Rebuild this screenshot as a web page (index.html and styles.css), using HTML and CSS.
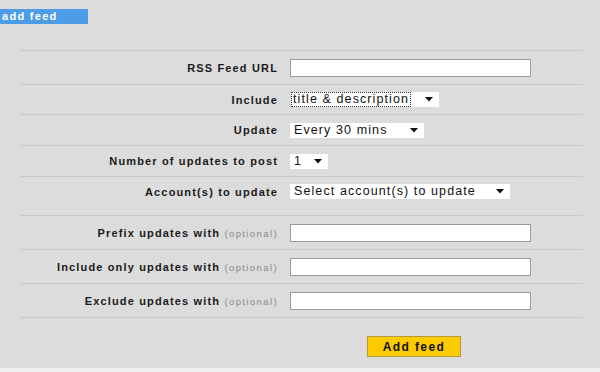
FILE: index.html
```html
<!DOCTYPE html>
<html>
<head>
<meta charset="utf-8">
<link rel="stylesheet" href="styles.css">
</head>
<body>
<div class="page">
  <div class="tab">add feed</div>
  <form class="form">
    <div class="row r34">
      <label class="lbl">RSS Feed URL</label>
      <div class="ctl"><input class="txt" type="text"></div>
    </div>
    <div class="row r30">
      <label class="lbl">Include</label>
      <div class="ctl">
        <div class="sel w148"><span class="val focus">title &amp; description</span><svg class="arr" width="8" height="5" viewBox="0 0 8 5"><path d="M0 0H8L4 4.5Z" fill="#111"/></svg></div>
      </div>
    </div>
    <div class="row r31">
      <label class="lbl">Update</label>
      <div class="ctl">
        <div class="sel w134"><span class="val">Every 30 mins</span><svg class="arr" width="8" height="5" viewBox="0 0 8 5"><path d="M0 0H8L4 4.5Z" fill="#111"/></svg></div>
      </div>
    </div>
    <div class="row r31">
      <label class="lbl">Number of updates to post</label>
      <div class="ctl">
        <div class="sel w38"><span class="val">1</span><svg class="arr" width="8" height="5" viewBox="0 0 8 5"><path d="M0 0H8L4 4.5Z" fill="#111"/></svg></div>
      </div>
    </div>
    <div class="row r39 padb">
      <label class="lbl">Account(s) to update</label>
      <div class="ctl">
        <div class="sel w220"><span class="val">Select account(s) to update</span><svg class="arr" width="8" height="5" viewBox="0 0 8 5"><path d="M0 0H8L4 4.5Z" fill="#111"/></svg></div>
      </div>
    </div>
    <div class="row r34">
      <label class="lbl">Prefix updates with <span class="opt">(optional)</span></label>
      <div class="ctl"><input class="txt" type="text"></div>
    </div>
    <div class="row r34">
      <label class="lbl">Include only updates with <span class="opt">(optional)</span></label>
      <div class="ctl"><input class="txt" type="text"></div>
    </div>
    <div class="row r34">
      <label class="lbl">Exclude updates with <span class="opt">(optional)</span></label>
      <div class="ctl"><input class="txt" type="text"></div>
    </div>
    <div class="btnrow">
      <button class="btn" type="button">Add feed</button>
    </div>
  </form>
</div>
<div class="foot"></div>
</body>
</html>
```
FILE: styles.css
```css
html, body {
  margin: 0;
  padding: 0;
  background: #dcdcdc;
  font-family: "Liberation Sans", Arial, sans-serif;
}
.page {
  height: 368px;
  padding-top: 9px;
  box-sizing: border-box;
}
.tab {
  width: 86px;
  height: 15px;
  line-height: 15px;
  padding-left: 2px;
  background: #4c9ce6;
  color: #fff;
  font-weight: bold;
  font-size: 11px;
  letter-spacing: 1.3px;
}
.form {
  margin: 26px 0 0 20px;
  width: 563px;
}
.row {
  display: grid;
  grid-template-columns: 258px 1fr;
  column-gap: 12px;
  align-items: center;
  border-top: 1px solid #c8c8c8;
  box-sizing: border-box;
}
.r34 { height: 34px; }
.r30 { height: 30px; }
.r31 { height: 31px; }
.r39 { height: 39px; }
.padb { padding-bottom: 9px; }
.lbl {
  text-align: right;
  font-weight: bold;
  font-size: 11px;
  letter-spacing: 1.15px;
  color: #1a1a1a;
  white-space: nowrap;
}
.opt {
  font-weight: normal;
  font-size: 9.5px;
  letter-spacing: 1.4px;
  color: #8a8a8a;
}
.ctl {
  display: flex;
  align-items: center;
}
.txt {
  width: 241px;
  height: 18px;
  box-sizing: border-box;
  margin: 0;
  border: 1px solid #9a9a9a;
  background: #fff;
  padding: 0 3px;
}
.sel {
  height: 15px;
  box-sizing: border-box;
  background: #fff;
  display: flex;
  align-items: center;
  justify-content: space-between;
  padding: 0 6px 0 4px;
  font-size: 12.5px;
  letter-spacing: 1.1px;
  color: #111;
}
.w148 { width: 148px; margin-left: 1px; padding-left: 1px; }
.w134 { width: 134px; }
.w38 { width: 38px; }
.w220 { width: 220px; }
.val {
  white-space: nowrap;
  line-height: 13px;
}
.focus {
  outline: 1px dotted #333;
  padding: 0 1px;
}
.arr { flex: none; }
.btnrow {
  border-top: 1px solid #c8c8c8;
  height: 51px;
  box-sizing: border-box;
  padding: 18px 0 0 347px;
}
.btn {
  width: 94px;
  height: 21px;
  margin: 0;
  padding: 0;
  background: #fbcb00;
  border: 1px solid #b59a3a;
  font-family: "Liberation Sans", Arial, sans-serif;
  font-weight: bold;
  font-size: 12px;
  letter-spacing: 1.4px;
  color: #111;
}
.foot {
  height: 4px;
  background: #efefef;
}
```
